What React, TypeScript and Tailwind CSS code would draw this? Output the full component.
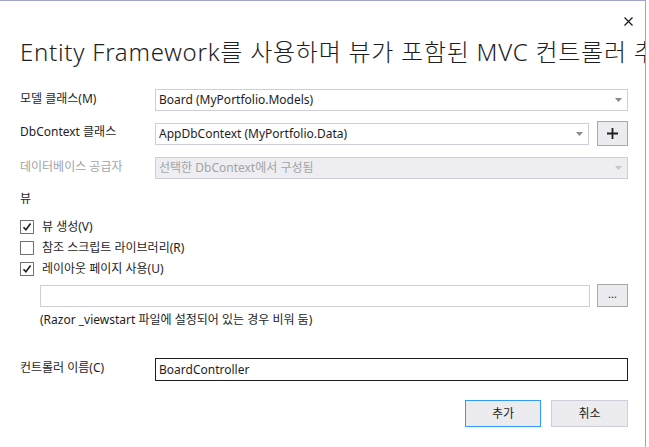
import React from "react";

const font = {
  fontFamily: '"Segoe UI", "Noto Sans", "Noto Sans CJK KR", sans-serif',
};

// small dropdown triangle used in the combo boxes
const Caret = ({ muted }: { muted?: boolean }) => (
  <svg width="7" height="4" viewBox="0 0 7 4" className="shrink-0">
    <path d="M0 0h7L3.5 4z" fill={muted ? "#c6c6c6" : "#8a8a8a"} />
  </svg>
);

const Combo = ({
  value,
  disabled,
  className = "",
}: {
  value: string;
  disabled?: boolean;
  className?: string;
}) => (
  <div
    className={`h-[22px] flex items-center justify-between pl-[3px] pr-[5px] border border-[#cccedb] text-[12px] ${
      disabled ? "bg-[#eeeef2] text-[#a2a4a5]" : "bg-white text-[#1e1e1e]"
    } ${className}`}
  >
    <span className="truncate">{value}</span>
    <Caret muted={disabled} />
  </div>
);

const Check = ({ checked, label }: { checked?: boolean; label: string }) => (
  <div className="flex items-center h-[14px] gap-[8px]">
    <div className="w-[14px] h-[14px] border border-[#717171] bg-white flex items-center justify-center">
      {checked && (
        <svg width="10" height="10" viewBox="0 0 10 10">
          <path d="M1.5 5.2l2.4 2.6L8.6 1.6" fill="none" stroke="#1e1e1e" strokeWidth="1.6" />
        </svg>
      )}
    </div>
    <span className="text-[12px] text-[#1e1e1e]">{label}</span>
  </div>
);

export default function App() {
  return (
    <div
      style={font}
      className="w-[646px] h-[447px] bg-white border-t border-r border-[#a0a3c4] overflow-hidden relative text-[#1e1e1e]"
    >
      {/* close glyph */}
      <div className="absolute left-[623px] top-[15px] w-[11px] h-[11px]">
        <svg width="11" height="11" viewBox="0 0 11 11">
          <path d="M1.5 1.5l8 8M9.5 1.5l-8 8" stroke="#1e1e1e" strokeWidth="1.3" />
        </svg>
      </div>

      <div className="pl-[20px] pr-[17px]">
        {/* the dialog is narrower than its title, so the end runs under the frame */}
        <div className="mr-[-17px] overflow-hidden">
          <h1 className="pt-[36px] h-[74px] text-[24px] font-light leading-[30px] whitespace-nowrap tracking-[0.75px]">
            Entity Framework를 사용하며 뷰가 포함된 MVC 컨트롤러 추가
          </h1>
        </div>

        <div className="mt-[14px] flex items-center">
          <span className="w-[135px] text-[12px] pb-[3px]">모델 클래스(M)</span>
          <Combo value="Board (MyPortfolio.Models)" className="flex-1" />
        </div>

        <div className="mt-[10px] flex items-center">
          <span className="w-[135px] text-[12px] pb-[3px]">DbContext 클래스</span>
          <Combo value="AppDbContext (MyPortfolio.Data)" className="flex-1" />
          <button className="ml-[8px] w-[31px] h-[25px] border border-[#a8a8a8] bg-[#ececf0] flex items-center justify-center">
            <svg width="11" height="11" viewBox="0 0 11 11">
              <path d="M5.5 0v11M0 5.5h11" stroke="#1e1e1e" strokeWidth="1.8" />
            </svg>
          </button>
        </div>

        <div className="mt-[11px] flex items-center">
          <span className="w-[135px] text-[12px] text-[#a2a4a5] pb-[3px]">데이터베이스 공급자</span>
          <Combo value="선택한 DbContext에서 구성됨" disabled className="flex-1" />
        </div>

        <div className="mt-[12px] text-[12px] leading-[16px]">뷰</div>

        <div className="mt-[13px] flex flex-col gap-[7px]">
          <Check checked label="뷰 생성(V)" />
          <Check label="참조 스크립트 라이브러리(R)" />
          <Check checked label="레이아웃 페이지 사용(U)" />
        </div>

        <div className="mt-[8px] pl-[20px] flex items-center">
          <div className="flex-1 h-[22px] border border-[#cccedb] bg-white" />
          <button className="ml-[7px] w-[31px] h-[23px] border border-[#a8a8a8] bg-[#ececf0] text-[11px] leading-[14px] pb-[4px]">
            ...
          </button>
        </div>
        <div className="mt-[5px] pl-[20px] text-[12px] leading-[16px]">
          (Razor _viewstart 파일에 설정되어 있는 경우 비워 둠)
        </div>

        <div className="mt-[30px] flex items-center">
          <span className="w-[135px] text-[12px] pb-[3px]">컨트롤러 이름(C)</span>
          <div className="flex-1 h-[23px] border border-[#1e1e1e] bg-white pl-[3px] text-[12px] leading-[21px]">
            BoardController
          </div>
        </div>

        <div className="mt-[19px] flex justify-end gap-[10px]">
          <button className="w-[76px] h-[27px] border border-[#3399ff] bg-[#ececf0] text-[12px]">
            추가
          </button>
          <button className="w-[77px] h-[27px] border border-[#cccedb] bg-[#ececf0] text-[12px]">
            취소
          </button>
        </div>
      </div>
    </div>
  );
}
